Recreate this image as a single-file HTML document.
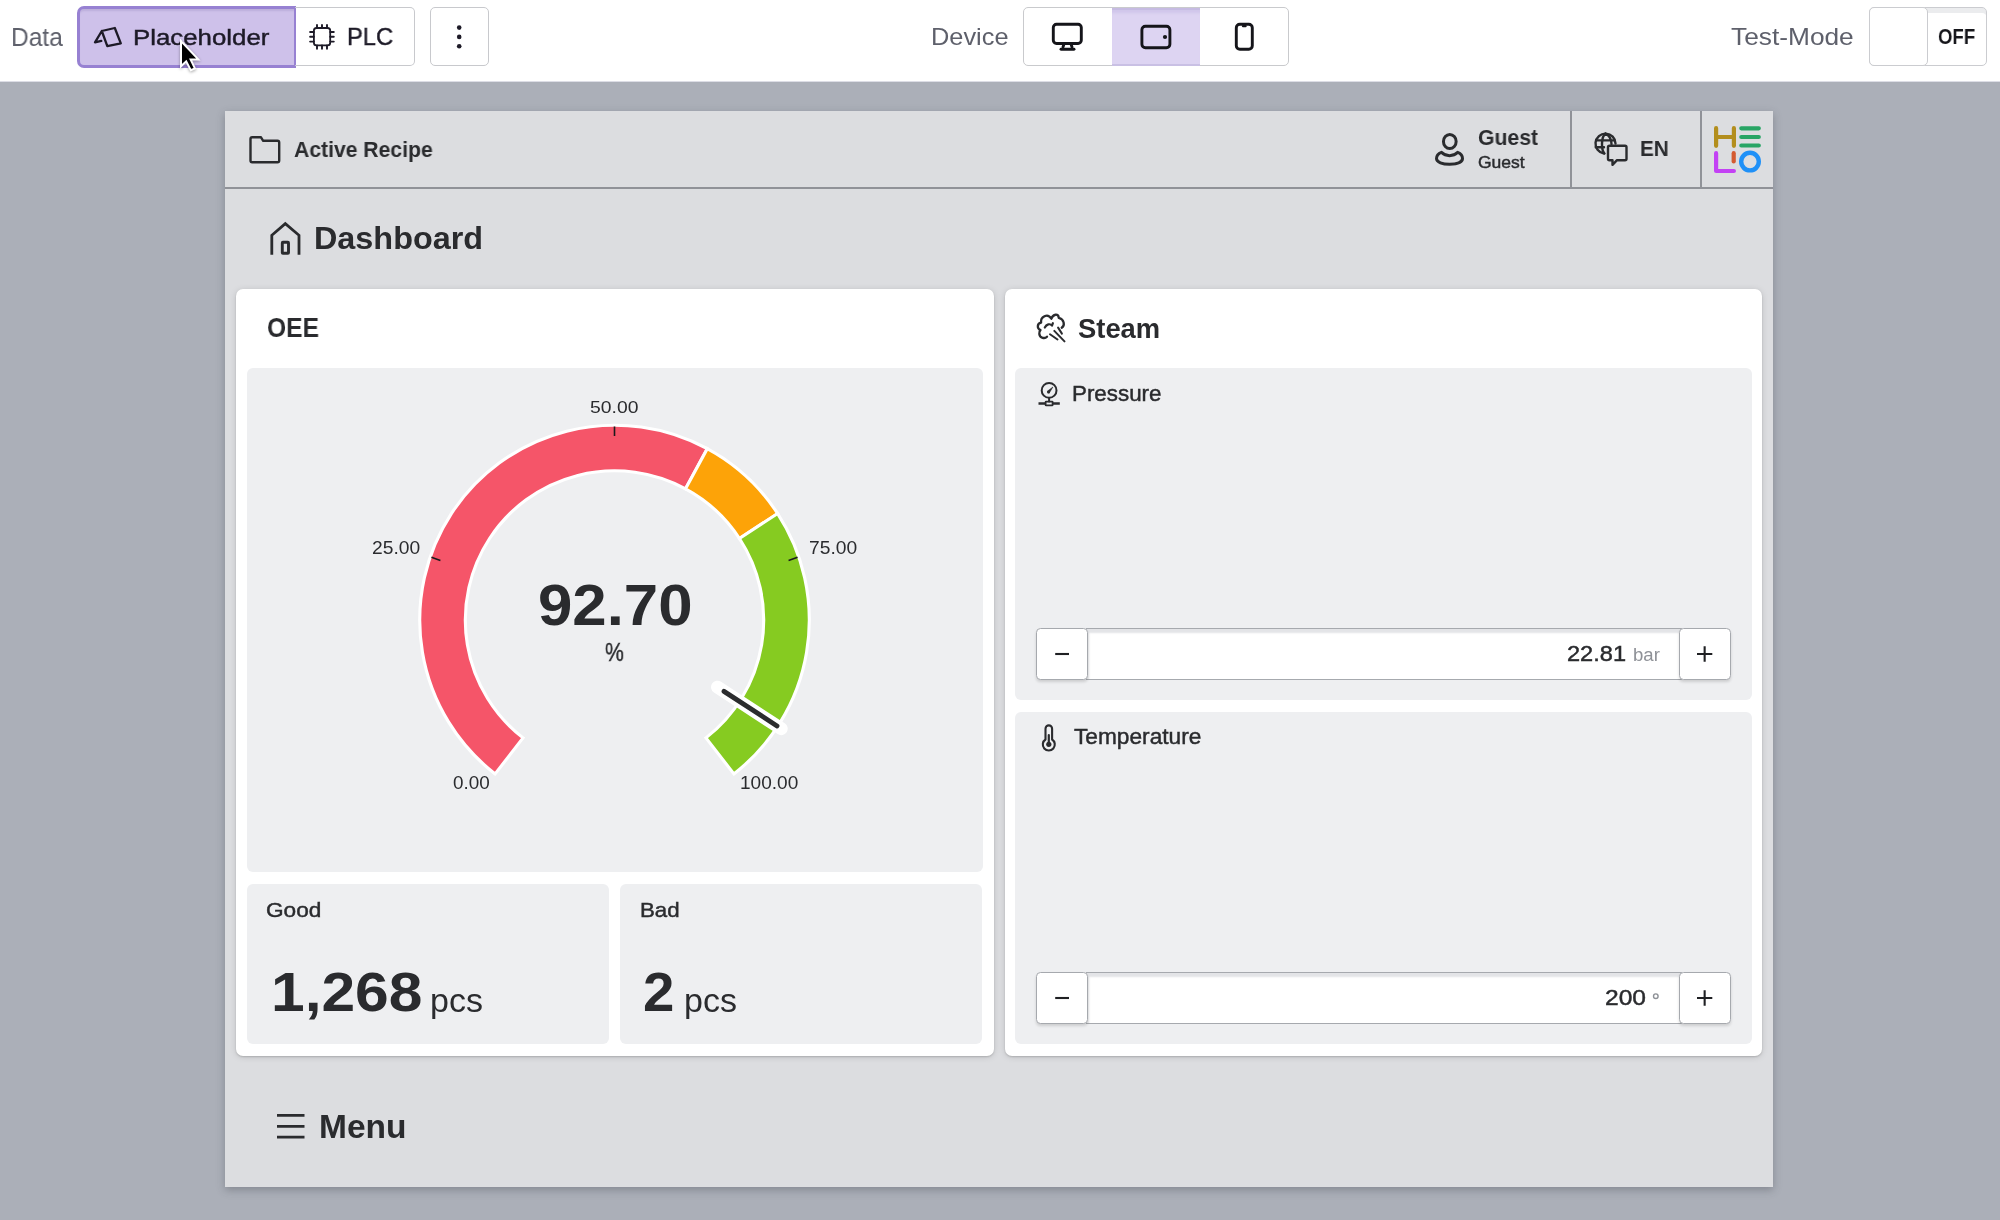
<!DOCTYPE html>
<html><head><meta charset="utf-8">
<style>
*{box-sizing:border-box;margin:0;padding:0}
html,body{width:2000px;height:1220px;overflow:hidden}
body{position:relative;background:#abafb8;font-family:"Liberation Sans",sans-serif;color:#2b2c2e}
.a{position:absolute}
.t{position:absolute;white-space:nowrap;line-height:1;transform-origin:0 0;will-change:transform}
#tb{left:0;top:0;width:2000px;height:82px;background:#fff;border-bottom:1px solid #dcdde5}
#frame{left:225px;top:111px;width:1548px;height:1076px;background:#dcdde0;box-shadow:0 3px 8px rgba(60,64,72,.35)}
#hdr{left:225px;top:111px;width:1548px;height:78px;border-bottom:2px solid #909298}
.card{background:#fff;border-radius:7px;box-shadow:0 1px 2px rgba(0,0,0,.16),0 1px 7px rgba(0,0,0,.12)}
.pnl{background:#eeeff1;border-radius:6px}
.btn{background:#fff;border:1.5px solid #a6a9ae;border-radius:4.5px;box-shadow:0 2px 3px rgba(0,0,0,.14)}
.inp{background:#fff;border-top:1.5px solid #a6a9ae;border-bottom:1.5px solid #a6a9ae;box-shadow:inset 0 5px 2px -1px #e3e4e7,inset 5px 0 2px -2px #e8e9eb}
svg{position:absolute;left:0;top:0}
</style></head><body>

<!-- top toolbar -->
<div id="tb" class="a"></div>
<div class="a" style="left:77px;top:5.5px;width:219px;height:62.5px;background:#cec1ea;border:3px solid #9781d2;border-right-width:2px;border-radius:7px 0 0 7px;box-shadow:inset 0 3px 2px -1px #bcaedb"></div>
<div class="a" style="left:295px;top:7.3px;width:120px;height:59px;border:1.6px solid #c8c9cd;border-left:none;border-radius:0 5px 5px 0"></div>
<div class="a" style="left:430px;top:7.3px;width:58.5px;height:59px;border:1.6px solid #c8c9cd;border-radius:5px"></div>

<div class="a" style="left:1023px;top:7.3px;width:265.5px;height:59px;border:1.6px solid #c9cacd;border-radius:5px"></div>
<div class="a" style="left:1112px;top:7.5px;width:88px;height:58.5px;background:#ddd4f2;border-top:2px solid #c6bbe2;border-bottom:2px solid #c9c0e4;box-shadow:inset 0 5px 3px -2px #d0c6ea"></div>

<div class="a" style="left:1869px;top:7.3px;width:117.5px;height:59px;border:1.6px solid #cbccd0;border-radius:5px;box-shadow:inset 0 6px 0 -1px #ebecee"></div>
<div class="a" style="left:1869px;top:7.3px;width:58.5px;height:59px;border:1.6px solid #cbccd0;border-radius:5px;background:#fff"></div>

<!-- frame -->
<div id="frame" class="a"></div>
<div id="hdr" class="a"></div>
<div class="a" style="left:1570px;top:111px;width:2px;height:77px;background:#909298"></div>
<div class="a" style="left:1699.5px;top:111px;width:2px;height:77px;background:#909298"></div>

<!-- cards -->
<div class="a card" style="left:236px;top:289px;width:758px;height:767px"></div>
<div class="a card" style="left:1005px;top:289px;width:757px;height:767px"></div>

<div class="a pnl" style="left:247px;top:368px;width:736px;height:504px"></div>
<div class="a pnl" style="left:247px;top:884px;width:362px;height:160px"></div>
<div class="a pnl" style="left:620px;top:884px;width:362px;height:160px"></div>
<div class="a pnl" style="left:1015px;top:368px;width:737px;height:332px"></div>
<div class="a pnl" style="left:1015px;top:712px;width:737px;height:332px"></div>

<!-- inputs -->
<div class="a inp" style="left:1086px;top:628px;width:596px;height:52px"></div>
<div class="a btn" style="left:1036px;top:628px;width:52px;height:52px"></div>
<div class="a btn" style="left:1679px;top:628px;width:51.5px;height:52px"></div>
<div class="a inp" style="left:1086px;top:972px;width:596px;height:52px"></div>
<div class="a btn" style="left:1036px;top:972px;width:52px;height:52px"></div>
<div class="a btn" style="left:1679px;top:972px;width:51.5px;height:52px"></div>

<!-- texts -->
<div class="t" style="left:11.0px;top:24.5px;font-size:25.5px;color:#5e606b;transform:scaleX(0.961)">Data</div>
<div class="t" style="left:132.9px;top:26.3px;font-size:22.9px;-webkit-text-stroke:0.45px #1d1a27;color:#1d1a27;transform:scaleX(1.128)">Placeholder</div>
<div class="t" style="left:346.9px;top:25.2px;font-size:24.5px;-webkit-text-stroke:0.45px #1d1a27;color:#1d1a27;transform:scaleX(0.968)">PLC</div>
<div class="t" style="left:930.5px;top:26.2px;font-size:23.4px;color:#5e606b;transform:scaleX(1.084)">Device</div>
<div class="t" style="left:1731.3px;top:25.8px;font-size:23.7px;color:#5e606b;transform:scaleX(1.110)">Test-Mode</div>
<div class="t" style="left:1938.3px;top:26.1px;font-size:22.3px;font-weight:700;color:#15151a;transform:scaleX(0.833)">OFF</div>
<div class="t" style="left:293.5px;top:138.6px;font-size:21.7px;font-weight:700;color:#2a2b2e;transform:scaleX(0.975)">Active Recipe</div>
<div class="t" style="left:1478.3px;top:127.2px;font-size:21.8px;font-weight:700;color:#2a2b2e;transform:scaleX(0.972)">Guest</div>
<div class="t" style="left:1478.3px;top:154.3px;font-size:17.2px;-webkit-text-stroke:0.45px #2a2b2e;color:#2a2b2e;transform:scaleX(1.019)">Guest</div>
<div class="t" style="left:1639.6px;top:138.0px;font-size:21.8px;font-weight:700;color:#2a2b2e;transform:scaleX(0.950)">EN</div>
<div class="t" style="left:313.6px;top:223.0px;font-size:31.4px;font-weight:700;color:#2a2b2e;transform:scaleX(1.031)">Dashboard</div>
<div class="t" style="left:267.3px;top:314.4px;font-size:27.3px;font-weight:700;color:#2a2b2e;transform:scaleX(0.901)">OEE</div>
<div class="t" style="left:590.4px;top:399.6px;font-size:16.9px;color:#2a2b2e;transform:scaleX(1.145)">50.00</div>
<div class="t" style="left:372.3px;top:539.6px;font-size:17.9px;color:#2a2b2e;transform:scaleX(1.075)">25.00</div>
<div class="t" style="left:809.1px;top:539.6px;font-size:17.9px;color:#2a2b2e;transform:scaleX(1.075)">75.00</div>
<div class="t" style="left:453.0px;top:775.0px;font-size:17.7px;color:#2a2b2e;transform:scaleX(1.067)">0.00</div>
<div class="t" style="left:740.3px;top:774.8px;font-size:17.9px;color:#2a2b2e;transform:scaleX(1.064)">100.00</div>
<div class="t" style="left:537.6px;top:575.6px;font-size:58.1px;font-weight:700;color:#2a2b2e;transform:scaleX(1.063)">92.70</div>
<div class="t" style="left:605.2px;top:639.1px;font-size:26.7px;-webkit-text-stroke:0.45px #2a2b2e;color:#2a2b2e;transform:scaleX(0.795)">%</div>
<div class="t" style="left:266.4px;top:899.8px;font-size:20.3px;-webkit-text-stroke:0.45px #2a2b2e;color:#2a2b2e;transform:scaleX(1.115)">Good</div>
<div class="t" style="left:270.6px;top:964.0px;font-size:56.2px;font-weight:700;color:#2a2b2e;transform:scaleX(1.077)">1,268</div>
<div class="t" style="left:640.3px;top:899.8px;font-size:20.3px;-webkit-text-stroke:0.45px #2a2b2e;color:#2a2b2e;transform:scaleX(1.099)">Bad</div>
<div class="t" style="left:642.9px;top:964.0px;font-size:56.2px;font-weight:700;color:#2a2b2e;transform:scaleX(1.004)">2</div>
<div class="t" style="left:1078.1px;top:315.0px;font-size:27.2px;font-weight:700;color:#2a2b2e;transform:scaleX(1.007)">Steam</div>
<div class="t" style="left:1072.0px;top:382.7px;font-size:21.7px;-webkit-text-stroke:0.45px #2a2b2e;color:#2a2b2e;transform:scaleX(1.031)">Pressure</div>
<div class="t" style="left:1566.8px;top:643.0px;font-size:22.0px;-webkit-text-stroke:0.45px #2a2b2e;color:#2a2b2e;transform:scaleX(1.072)">22.81</div>
<div class="t" style="left:1073.5px;top:726.4px;font-size:22.5px;-webkit-text-stroke:0.45px #2a2b2e;color:#2a2b2e;transform:scaleX(1.008)">Temperature</div>
<div class="t" style="left:1605.4px;top:986.9px;font-size:22.3px;-webkit-text-stroke:0.45px #2a2b2e;color:#2a2b2e;transform:scaleX(1.102)">200</div>
<div class="t" style="left:319.0px;top:1109.7px;font-size:33.5px;font-weight:700;color:#2a2b2e;transform:scaleX(0.995)">Menu</div>
<div class="t" style="left:430.4px;top:982.8px;font-size:34px;color:#2a2b2e;">pcs</div>
<div class="t" style="left:683.7px;top:982.8px;font-size:34px;color:#2a2b2e;">pcs</div>
<div class="t" style="left:1632.9px;top:646.9px;font-size:17.5px;color:#8e9197;transform:scaleX(1.063)">bar</div>

<svg width="2000" height="1220" viewBox="0 0 2000 1220">
<g fill="none" stroke="#1d1a27" stroke-width="2.3" stroke-linejoin="round" stroke-linecap="round">
 <!-- placeholder icon -->
 <path d="M101.8,31 L114.8,28 L120.8,43.3 L107.3,46.2 Z M101.8,31 L95,42.3 L101.3,40.9"/>
 <!-- chip -->
 <rect x="313.9" y="28" width="16.3" height="17.4" rx="2.6" stroke-width="1.8"/>
 <path d="M317,24.9V28 M322,24.9V28 M327,24.9V28 M317,45.4V48.8 M322,45.4V48.8 M327,45.4V48.8 M310.1,32H313.9 M310.1,36.8H313.9 M310.1,41.6H313.9 M330.2,32H333.8 M330.2,36.8H333.8 M330.2,41.6H333.8" stroke-width="1.9" stroke-linecap="round"/>
</g>
<g fill="#1d1a27"><circle cx="459.2" cy="27.6" r="2.3"/><circle cx="459.2" cy="36.9" r="2.3"/><circle cx="459.2" cy="46.3" r="2.3"/></g>
<g fill="none" stroke="#15151a" stroke-width="2.9" stroke-linejoin="round" stroke-linecap="round">
 <rect x="1053.3" y="24.3" width="28" height="19.2" rx="3.2"/>
 <path d="M1064,44 L1063,47 M1071,44 L1072,47"/>
 <path d="M1061,49.3 H1074"/>
 <rect x="1141.9" y="26.2" width="28" height="21.6" rx="3.5"/>
 <rect x="1236.3" y="24.3" width="16" height="25" rx="3.5"/>
 <path d="M1243,26.2 H1245.6" stroke-width="2.2"/>
</g>
<circle cx="1165" cy="37" r="2.1" fill="#15151a"/>

<!-- cursor -->
<path d="M181,41 L181,66.3 L186.2,61.3 L190.8,70.2 L194.9,68.4 L190.6,59.4 L198.3,59.4 Z" fill="#000" stroke="#fff" stroke-width="2" stroke-linejoin="miter" style="filter:drop-shadow(0 1px 1.5px rgba(0,0,0,.35))"/>

<g fill="none" stroke="#2a2b2e" stroke-width="2.4" stroke-linejoin="round" stroke-linecap="round">
 <!-- folder -->
 <path d="M250.5,160.5 V139 Q250.5,137.3 252.2,137.3 H261 L263.2,140.8 H277.5 Q279.2,140.8 279.2,142.5 V160.5 Q279.2,162.2 277.5,162.2 H252.2 Q250.5,162.2 250.5,160.5 Z"/>
 <!-- person -->
 <ellipse cx="1449.8" cy="141.45" rx="6.35" ry="7" stroke-width="3"/>
 <path d="M1441.5,152.3 C1444,154.9 1446.5,155.7 1449.6,155.7 C1452.7,155.7 1455.2,154.9 1457.7,152.3 C1461.5,153.7 1462.5,156.5 1462.5,158.6 C1462.5,162.3 1456.7,164.2 1449.6,164.2 C1442.5,164.2 1436.5,162.3 1436.5,158.6 C1436.5,156.5 1437.7,153.7 1441.5,152.3 Z" stroke-width="3"/>
 <!-- globe -->
 <path d="M1615.5,143.5 A10,10 0 1 0 1604,153.5"/>
 <path d="M1605.5,133.5 C1601,137 1601,150 1604.5,153.5 M1605.5,133.5 C1610,136 1611.5,140 1611.5,144 M1596.3,140.4 H1614.5 M1595.8,147.2 H1604"/>
 <!-- chat -->
 <path d="M1609.5,145.8 H1625 Q1626.5,145.8 1626.5,147.3 V158.7 Q1626.5,160.2 1625,160.2 H1617 L1612.5,164.8 V160.2 H1609.5 Q1608,160.2 1608,158.7 V147.3 Q1608,145.8 1609.5,145.8 Z"/>
 <!-- home -->
 <path d="M271.8,254.7 V235.3 L285.3,223.6 L299,235.3 V254.7" stroke-width="2.8" stroke-linecap="butt" stroke-linejoin="miter"/>
 <rect x="282.3" y="242.3" width="6.2" height="11" stroke-width="2.9" rx="0.6"/>
 <!-- steam -->
 <path d="M1047,336.7 C1045,338.8 1039.8,338.5 1039.3,333.8 C1039.1,332.3 1039.6,330.9 1040.5,330.1 C1036.8,328.6 1036.9,323.6 1041.1,322.7 C1040.3,317 1047.5,312.5 1051.4,318.7 C1053,313.8 1058.3,313.3 1058.8,317.9 C1064.2,319.3 1065.3,325.3 1061.7,327.7" stroke-width="2.3"/>
 <path d="M1044.8,327.6 C1046.5,324.2 1050,323.2 1052,325.6 L1052.9,323.2" stroke-width="2.2"/>
 <path d="M1050,334.3 L1057.5,339.5 M1054.3,330.9 L1064.5,341.4 M1058.1,327.6 L1061.9,333.6" stroke-width="2"/>
 <!-- pressure gauge -->
 <circle cx="1049.1" cy="390.4" r="7.4" stroke-width="2"/>
 <path d="M1047.4,391.2 L1052.9,387 L1049.3,392.9 Z" fill="#2a2b2e" stroke-width="0.6"/><circle cx="1048.5" cy="392" r="1.5" fill="#2a2b2e" stroke="none"/>
 <path d="M1049.1,398 V401.5" stroke-width="2"/>
 <path d="M1038.5,403.5 H1045.5 M1052.7,403.5 H1059.8" stroke-width="2.4" stroke-linecap="butt"/>
 <rect x="1045.6" y="401.6" width="7" height="3.8" stroke-width="1.8" rx="0.5"/>
 <!-- thermometer -->
 <path d="M1045.5,739.5 V728.7 A3.3,3.3 0 0 1 1052.1,728.7 V739.5 A6,6 0 1 1 1045.5,739.5 Z" stroke-width="2.1"/>
 <path d="M1048.8,735 V744" stroke-width="2.2"/>
</g>
<circle cx="1048.8" cy="744.3" r="2.6" fill="#2a2b2e"/>

<!-- menu icon -->
<path d="M277,1115.3 H304.5 M277,1126.3 H304.5 M277,1137.2 H304.5" stroke="#2a2b2e" stroke-width="2.7" fill="none"/>

<!-- plus/minus -->
<g stroke="#1f2023" stroke-width="2.1" fill="none">
 <path d="M1055.2,654 H1069"/>
 <path d="M1697,654 H1712.3 M1704.65,646.3 V661.7"/>
 <path d="M1055.2,998 H1069"/>
 <path d="M1697,998 H1712.3 M1704.65,990.3 V1005.7"/>
</g>
<circle cx="1655.8" cy="996.2" r="2.3" fill="none" stroke="#8e9197" stroke-width="1.4"/>

<!-- logo -->
<g fill="none" stroke-width="4.2" stroke-linecap="round" stroke-linejoin="round">
 <path d="M1716.1,128.2 V145.8 M1733.9,128.2 V145.8 M1716.1,137 H1733.9" stroke="#b38e1d"/>
 <path d="M1741.3,128.3 H1758.8 M1741.3,137 H1758.8 M1741.3,145.5 H1758.8" stroke="#28a565"/>
 <path d="M1716.1,153.2 V171 H1733.9" stroke="#c341f4"/>
 <path d="M1733.7,153.2 V161.5" stroke="#d45b31"/>
 <circle cx="1750" cy="161.6" r="8.8" stroke="#1f90f7" stroke-width="4.4"/>
</g>

<!-- gauge -->
<g stroke="#fff" stroke-width="3.1" stroke-linejoin="miter">
 <path fill="#f55569" d="M495.11,773.92 A194.8,194.8 0 0 1 707.27,448.71 L685.55,488.81 A149.2,149.2 0 0 0 523.05,737.89 Z"/>
 <path fill="#fda308" d="M707.27,448.71 A194.8,194.8 0 0 1 777.65,513.56 L739.46,538.48 A149.2,149.2 0 0 0 685.55,488.81 Z"/>
 <path fill="#86cb21" d="M777.65,513.56 A194.8,194.8 0 0 1 733.89,773.92 L705.95,737.89 A149.2,149.2 0 0 0 739.46,538.48 Z"/>
</g>
<g stroke="#1a1a1c" stroke-width="1.6">
 <path d="M431.43,557.32 L440.42,560.40"/>
 <path d="M614.50,426.50 L614.50,436.00"/>
 <path d="M797.57,557.32 L788.58,560.40"/>
</g>
<path d="M717.54,687.17 L781.21,728.67" stroke="#fff" stroke-width="13" stroke-linecap="round"/>
<path d="M723.99,691.38 L777.02,725.94" stroke="#2b2c2e" stroke-width="4.8" stroke-linecap="round"/>
</svg>

</body></html>
